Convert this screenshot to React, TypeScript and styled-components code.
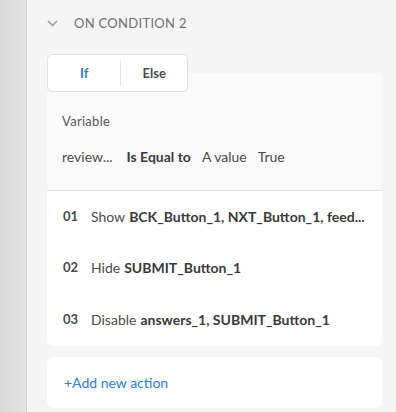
import React from "react";
import styled, { createGlobalStyle } from "styled-components";

const GlobalStyle = createGlobalStyle`
  body {
    margin: 0;
    font-family: Lato, "Open Sans", sans-serif;
    color: #4b4b4b;
  }
`;

const Layout = styled.div`
  display: flex;
  width: 396px;
  height: 412px;
  overflow: hidden;
`;

const Rail = styled.div`
  flex-shrink: 0;
  width: 26px;
  background: linear-gradient(to right, #d9d9d9, #e2e2e2);
  border-right: 1px solid #d3d3d3;
`;

const Main = styled.div`
  flex: 1;
  min-width: 0;
  display: flex;
  flex-direction: column;
  background: #f5f5f5;
  padding: 0 14px 0 20px;
`;

const Header = styled.div`
  display: flex;
  align-items: center;
  gap: 16px;
  height: 46px;
  font-size: 13px;
  letter-spacing: 0.3px;
  color: #707070;
`;

const Block = styled.div`
  display: flex;
  flex-direction: column;
`;

const Tabs = styled.div`
  position: relative;
  z-index: 1;
  display: flex;
  align-items: center;
  width: 141px;
  height: 38px;
  margin-top: 8px;
  box-sizing: border-box;
  background: #ffffff;
  border: 1px solid #e1e1e1;
  border-radius: 5px;
`;

const Tab = styled.div<{ $active?: boolean; $width: number }>`
  width: ${({ $width }) => $width}px;
  text-align: center;
  font-size: 13px;
  font-weight: 700;
  color: ${({ $active }) => ($active ? "#2680eb" : "#4b4b4b")};
`;

const TabDivider = styled.div`
  width: 1px;
  height: 25px;
  background: #e4e4e4;
`;

const ConditionPanel = styled.div`
  margin-top: -19px;
  padding: 19px 15px 0;
  height: 98px;
  background: #fafafa;
  border-bottom: 1px solid #e2e2e2;
  display: flex;
  flex-direction: column;
`;

const FieldLabel = styled.div`
  margin-top: 21px;
  font-size: 13px;
  letter-spacing: 0.3px;
  color: #555555;
`;

const ConditionRow = styled.div`
  display: flex;
  align-items: center;
  gap: 11px;
  margin-top: 19px;
  font-size: 14px;
  color: #4b4b4b;
`;

const Token = styled.span<{ $bold?: boolean }>`
  font-weight: ${({ $bold }) => ($bold ? 700 : 400)};
  color: ${({ $bold }) => ($bold ? "#3a3a3a" : "#4b4b4b")};
  &:first-child {
    margin-right: 3px;
  }
`;

const ActionList = styled.div`
  display: flex;
  flex-direction: column;
  padding: 0 16px;
  height: 155px;
  background: #ffffff;
  border-radius: 0 0 6px 6px;
`;

const ActionRow = styled.div`
  display: flex;
  align-items: center;
  min-width: 0;
  height: 52px;
  font-size: 14px;
  white-space: nowrap;
  &:first-child {
    height: 50px;
  }
`;

const Index = styled.span`
  width: 28px;
  flex-shrink: 0;
  font-size: 13px;
  font-weight: 700;
  color: #4b4b4b;
`;

const Verb = styled.span`
  flex-shrink: 0;
  color: #4b4b4b;
  margin-right: 4px;
`;

const Targets = styled.span`
  min-width: 0;
  font-weight: 700;
  color: #3a3a3a;
`;

const AddCard = styled.div`
  display: flex;
  align-items: center;
  margin-top: 11px;
  height: 51px;
  padding: 0 17px;
  background: #ffffff;
  border-radius: 6px;
`;

const AddLink = styled.span`
  font-size: 14px;
  color: #2680eb;
`;

const Chevron = () => (
  <svg width="11" height="7" viewBox="0 0 11 7" fill="none">
    <path d="M1 1l4.5 4.5L10 1" stroke="#a8a8a8" strokeWidth="1.8" />
  </svg>
);

const actions = [
  { verb: "Show", targets: "BCK_Button_1, NXT_Button_1, feed..." },
  { verb: "Hide", targets: "SUBMIT_Button_1" },
  { verb: "Disable", targets: "answers_1, SUBMIT_Button_1" },
];

export default function App() {
  return (
    <Layout>
      <GlobalStyle />
      <Rail />
      <Main>
        <Header>
          <Chevron />
          ON CONDITION 2
        </Header>
        <Block>
          <Tabs>
            <Tab $active $width={73}>If</Tab>
            <TabDivider />
            <Tab $width={66}>Else</Tab>
          </Tabs>
          <ConditionPanel>
            <FieldLabel>Variable</FieldLabel>
            <ConditionRow>
              <Token>review...</Token>
              <Token $bold>Is Equal to</Token>
              <Token>A value</Token>
              <Token>True</Token>
            </ConditionRow>
          </ConditionPanel>
          <ActionList>
            {actions.map((a, i) => (
              <ActionRow key={a.verb}>
                <Index>{String(i + 1).padStart(2, "0")}</Index>
                <Verb>{a.verb}</Verb>
                <Targets>{a.targets}</Targets>
              </ActionRow>
            ))}
          </ActionList>
        </Block>
        <AddCard>
          <AddLink>+Add new action</AddLink>
        </AddCard>
      </Main>
    </Layout>
  );
}
